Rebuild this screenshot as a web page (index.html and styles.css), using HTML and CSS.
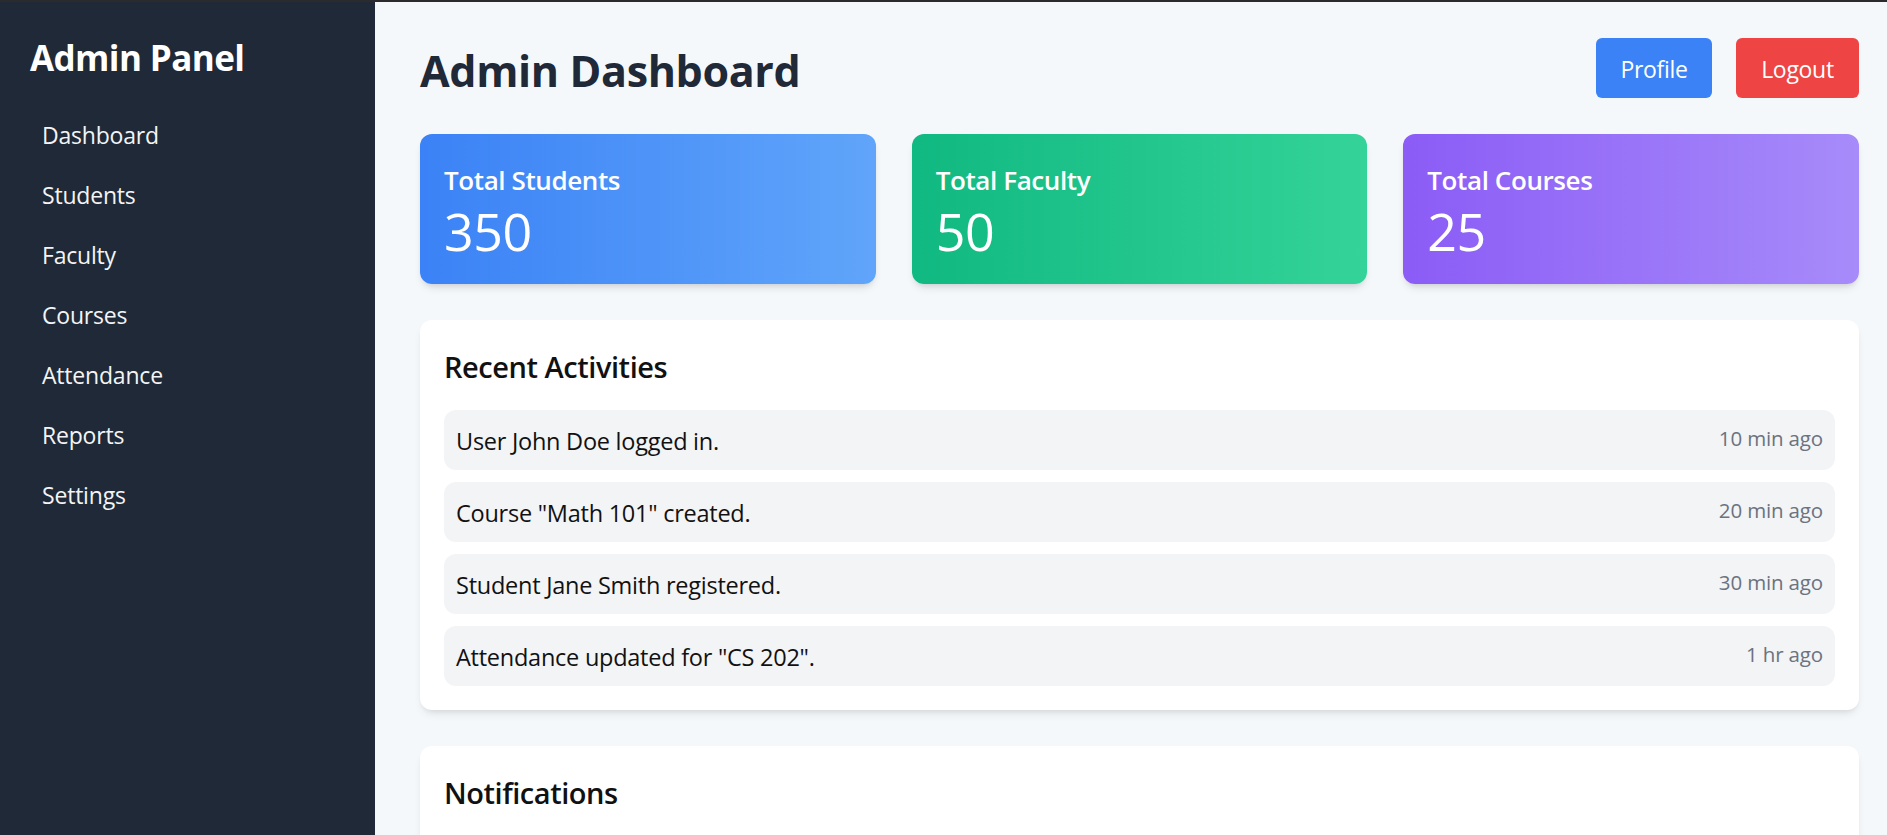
FILE: index.html
```html
<!DOCTYPE html>
<html lang="en">
<head>
<meta charset="utf-8">
<title>Admin Dashboard</title>
<link rel="stylesheet" href="styles.css">
</head>
<body>
<div class="topline"></div>
<div class="layout">
  <aside class="sidebar">
    <h2 class="brand">Admin Panel</h2>
    <nav class="nav">
      <a class="nav-link" href="#">Dashboard</a>
      <a class="nav-link" href="#">Students</a>
      <a class="nav-link" href="#">Faculty</a>
      <a class="nav-link" href="#">Courses</a>
      <a class="nav-link" href="#">Attendance</a>
      <a class="nav-link" href="#">Reports</a>
      <a class="nav-link" href="#">Settings</a>
    </nav>
  </aside>
  <main class="main">
    <header class="header">
      <h1 class="title">Admin Dashboard</h1>
      <div class="actions">
        <button class="btn btn-blue">Profile</button>
        <button class="btn btn-red">Logout</button>
      </div>
    </header>
    <section class="stats">
      <div class="stat stat-blue">
        <div class="stat-label">Total Students</div>
        <div class="stat-value">350</div>
      </div>
      <div class="stat stat-green">
        <div class="stat-label">Total Faculty</div>
        <div class="stat-value">50</div>
      </div>
      <div class="stat stat-purple">
        <div class="stat-label">Total Courses</div>
        <div class="stat-value">25</div>
      </div>
    </section>
    <section class="panel">
      <h3 class="panel-title">Recent Activities</h3>
      <ul class="list">
        <li class="item"><span>User John Doe logged in.</span><span class="time">10 min ago</span></li>
        <li class="item"><span>Course "Math 101" created.</span><span class="time">20 min ago</span></li>
        <li class="item"><span>Student Jane Smith registered.</span><span class="time">30 min ago</span></li>
        <li class="item"><span>Attendance updated for "CS 202".</span><span class="time">1 hr ago</span></li>
      </ul>
    </section>
    <section class="panel">
      <h3 class="panel-title">Notifications</h3>
      <ul class="list">
        <li class="item"><span>System maintenance scheduled for Sunday.</span><span class="time">2 hr ago</span></li>
        <li class="item"><span>New semester registration is open.</span><span class="time">1 day ago</span></li>
      </ul>
    </section>
  </main>
</div>
</body>
</html>
```
FILE: styles.css
```css
* { box-sizing: border-box; }
html, body { margin: 0; padding: 0; }
body {
  font-family: "Open Sans", "Noto Sans", "Liberation Sans", sans-serif;
  background: #f5f8fb;
  color: #111;
}
.topline { height: 2px; background: #2b2b2d; }
.layout { display: flex; min-height: calc(100vh - 2px); }
.sidebar {
  width: 375px;
  flex: 0 0 375px;
  background: #1f2937;
  color: #fff;
  padding: 32px 30px 30px;
}
.brand {
  margin: 0 0 22px;
  font-size: 35px;
  line-height: 48px;
  font-weight: 700;
  letter-spacing: -0.6px;
}
.nav { display: flex; flex-direction: column; }
.nav-link {
  display: block;
  padding: 13px 12px 11px;
  font-size: 23px;
  line-height: 36px;
  color: #f3f4f6;
  text-decoration: none;
  letter-spacing: -0.2px;
}
.main {
  flex: 1;
  padding: 36px 28px 40px 45px;
}
.header {
  display: flex;
  justify-content: space-between;
  align-items: flex-start;
}
.title {
  margin: 0;
  padding-top: 3px;
  font-size: 43px;
  line-height: 60px;
  font-weight: 700;
  color: #1f2937;
  letter-spacing: -0.35px;
}
.actions { display: flex; gap: 24px; }
.btn {
  font-family: inherit;
  border: 0;
  border-radius: 6px;
  padding: 13px 24px 11px;
  font-size: 23px;
  line-height: 36px;
  color: #fff;
  letter-spacing: -0.3px;
}
.btn-blue { background: #3b82f6; width: 116px; }
.btn-red { background: #ef4444; width: 123px; }
.stats {
  display: grid;
  grid-template-columns: repeat(3, 1fr);
  gap: 36px;
  margin-top: 33px;
}
.stat {
  border-radius: 12px;
  padding: 25px 24px 23px;
  color: #fff;
  box-shadow: 0 6px 10px -3px rgba(0,0,0,0.12), 0 3px 5px -2px rgba(0,0,0,0.08);
}
.stat-blue { background: linear-gradient(to right, #3b82f6, #60a5fa); }
.stat-green { background: linear-gradient(to right, #10b981, #34d399); }
.stat-purple { background: linear-gradient(to right, #8b5cf6, #a78bfa); }
.stat-label {
  font-size: 26px;
  line-height: 42px;
  font-weight: 600;
  letter-spacing: -0.4px;
}
.stat-value {
  font-size: 52px;
  line-height: 60px;
  font-weight: 400;
  letter-spacing: -0.5px;
}
.panel {
  background: #fff;
  border-radius: 12px;
  padding: 24px;
  margin-top: 36px;
  box-shadow: 0 6px 10px -3px rgba(0,0,0,0.1), 0 3px 5px -2px rgba(0,0,0,0.06);
}
.panel-title {
  margin: 0 0 22px;
  padding-top: 2px;
  font-size: 29px;
  line-height: 42px;
  font-weight: 600;
  color: #111;
  letter-spacing: -0.45px;
}
.list { list-style: none; margin: 0; padding: 0; display: flex; flex-direction: column; gap: 12px; }
.item {
  display: flex;
  justify-content: space-between;
  align-items: flex-start;
  background: #f3f4f6;
  border-radius: 12px;
  padding: 13px 12px 11px;
  font-size: 23.5px;
  line-height: 36px;
  letter-spacing: -0.25px;
}
.time {
  font-size: 20.5px;
  line-height: 30px;
  color: #6b7280;
  letter-spacing: -0.15px;
}
```
